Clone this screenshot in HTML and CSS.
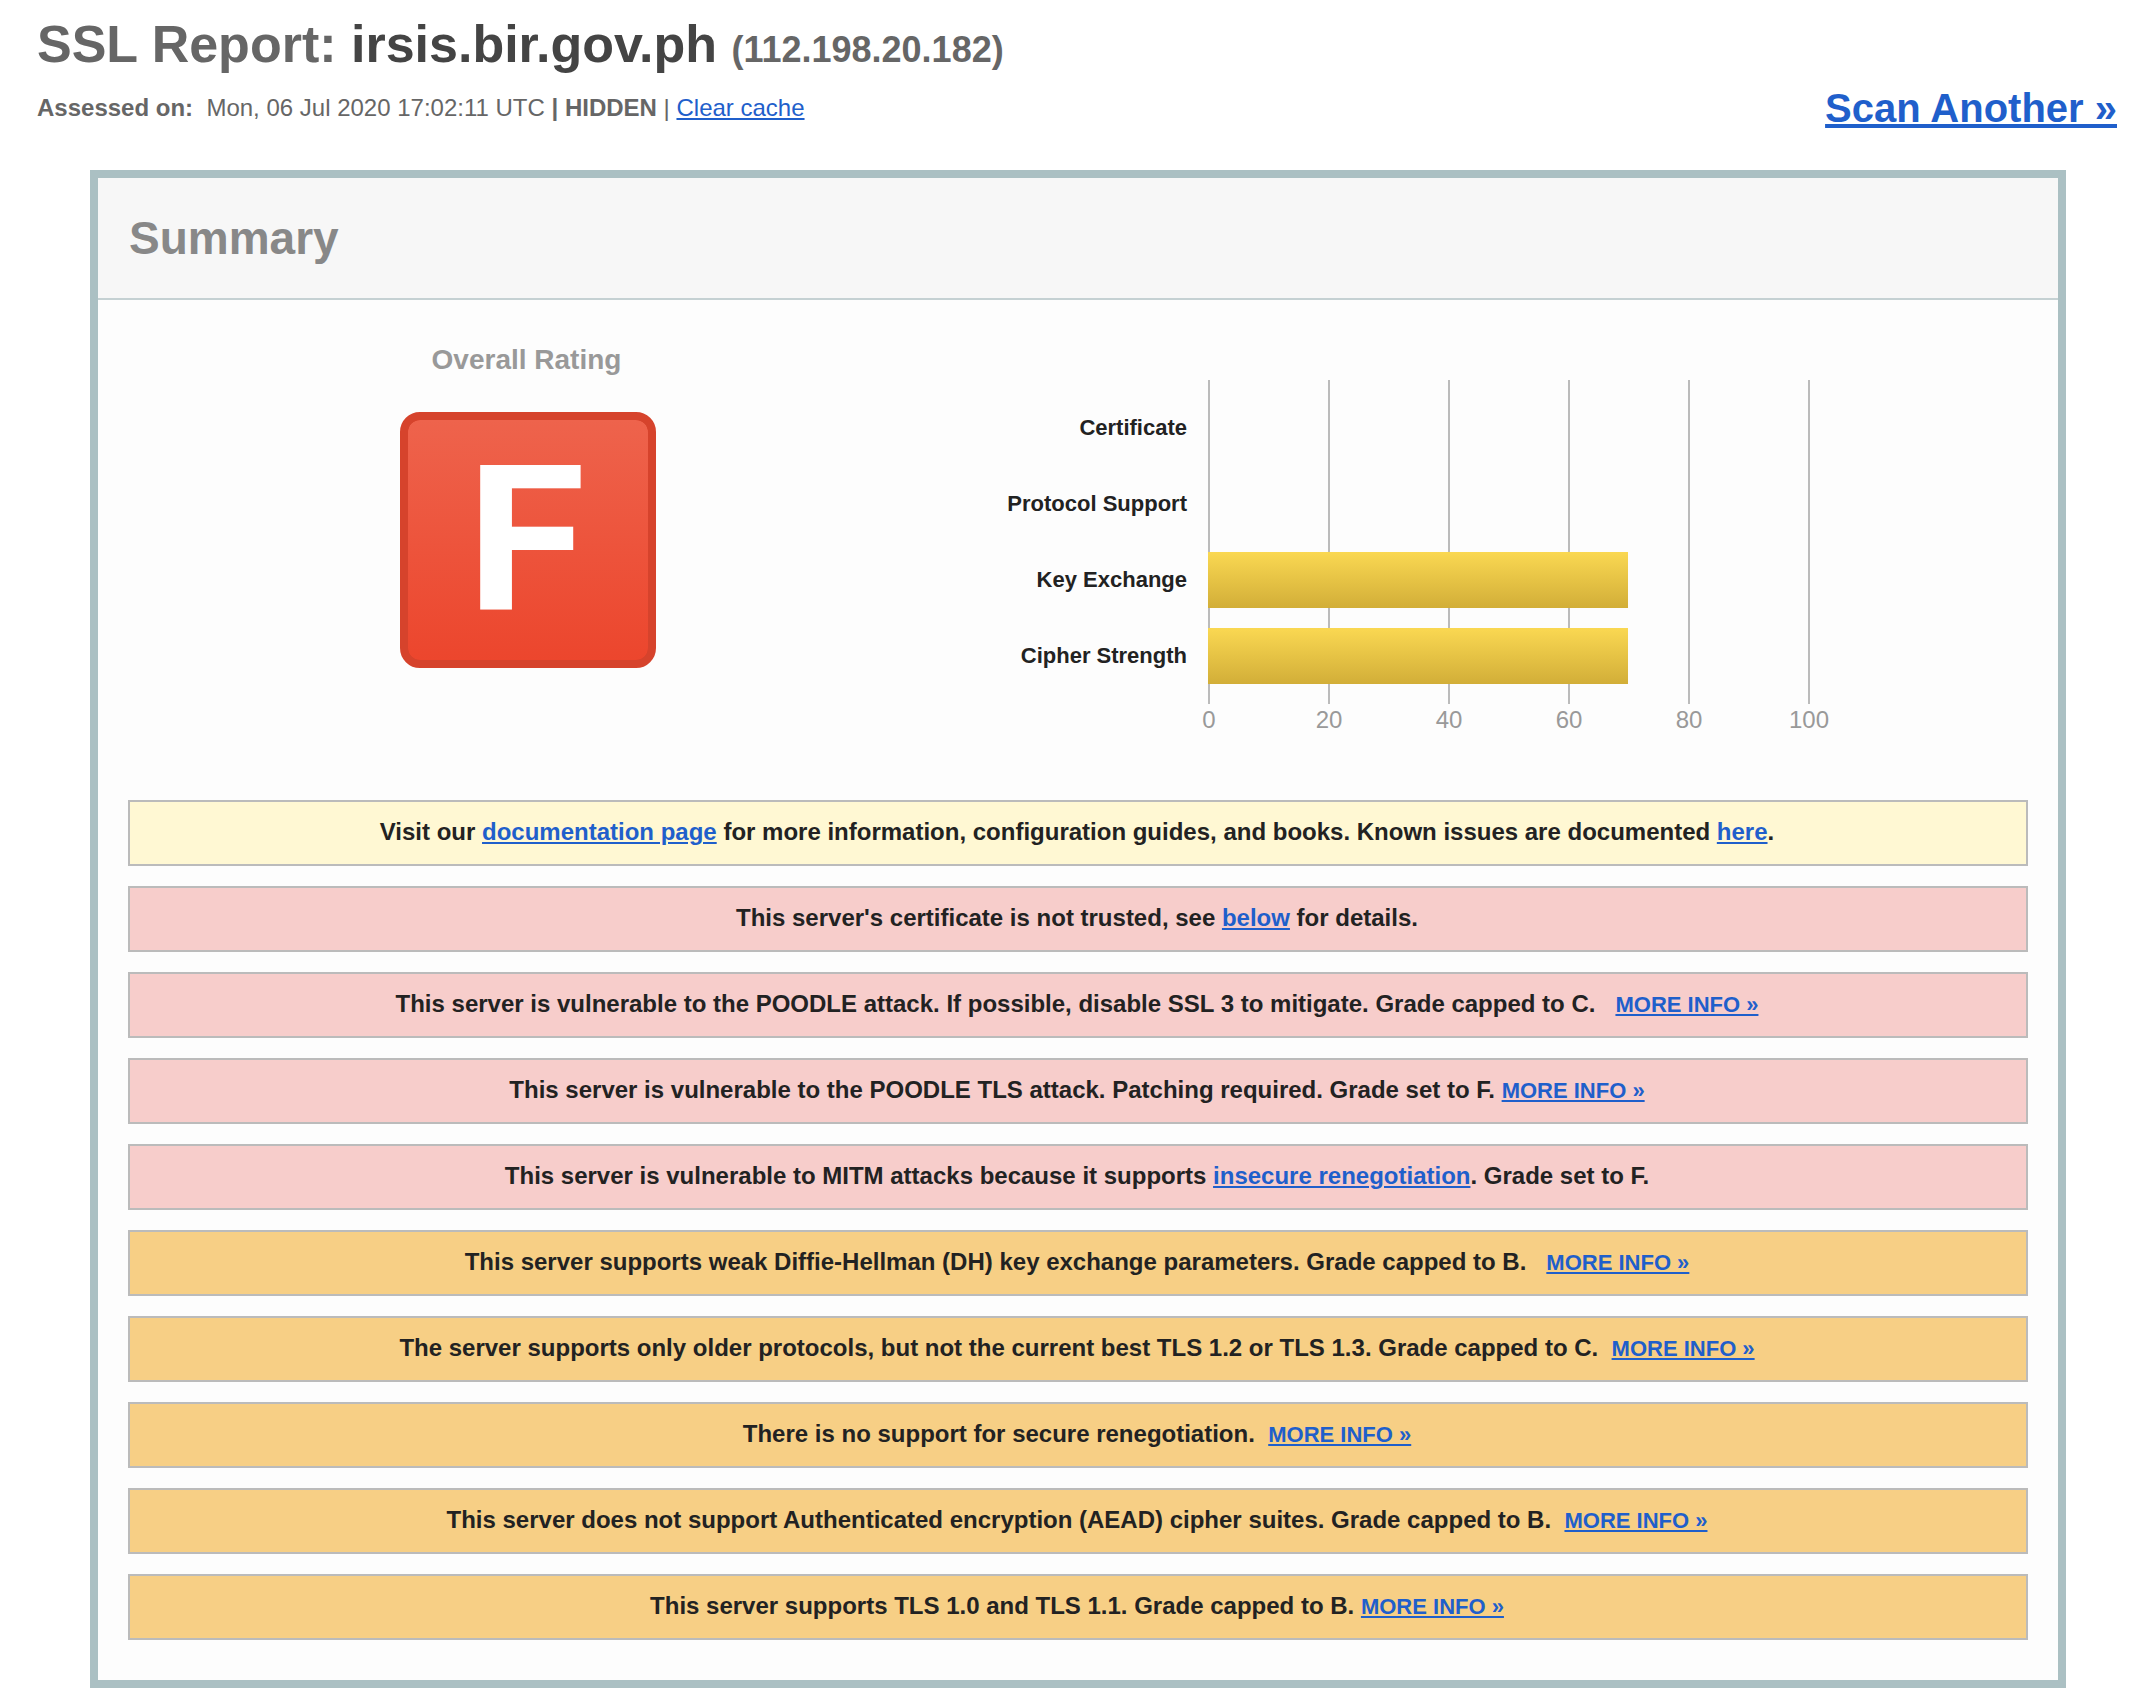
FILE: index.html
```html
<!DOCTYPE html>
<html lang="en">
<head>
<meta charset="utf-8">
<title>SSL Report: irsis.bir.gov.ph</title>
<link rel="stylesheet" href="styles.css">
</head>
<body>
<header class="page-header">
  <h1 class="title">SSL Report: <span class="host">irsis.bir.gov.ph</span> <span class="ip">(112.198.20.182)</span></h1>
  <div class="subline">
    <div class="assessed"><b>Assessed on:</b>&nbsp; Mon, 06 Jul 2020 17:02:11 UTC <b>| HIDDEN</b> | <a href="#">Clear cache</a></div>
    <a class="scan" href="#">Scan Another »</a>
  </div>
</header>
<main class="panel">
  <div class="panel-head"><h2>Summary</h2></div>
  <div class="panel-body">
    <section class="overview">
      <div class="rating">
        <div class="rating-title">Overall Rating</div>
        <div class="grade"><span class="grade-letter">F</span></div>
      </div>
      <div class="chart">
        <div class="labels">
          <div>Certificate</div>
          <div>Protocol Support</div>
          <div>Key Exchange</div>
          <div>Cipher Strength</div>
        </div>
        <div>
          <div class="plot">
            <div class="track"><div class="bar" style="width:0"></div></div>
            <div class="track"><div class="bar" style="width:0"></div></div>
            <div class="track"><div class="bar" style="width:70%"></div></div>
            <div class="track"><div class="bar" style="width:70%"></div></div>
          </div>
          <div class="axis"><span>0</span><span>20</span><span>40</span><span>60</span><span>80</span><span>100</span></div>
        </div>
      </div>
    </section>
    <section class="messages">
      <div class="msg info">Visit our <a href="#">documentation page</a> for more information, configuration guides, and books. Known issues are documented <a href="#">here</a>.</div>
      <div class="msg error">This server's certificate is not trusted, see <a href="#">below</a> for details.</div>
      <div class="msg error">This server is vulnerable to the POODLE attack. If possible, disable SSL 3 to mitigate. Grade capped to C. &nbsp; <a class="more" href="#">MORE INFO »</a></div>
      <div class="msg error">This server is vulnerable to the POODLE TLS attack. Patching required. Grade set to F. <a class="more" href="#">MORE INFO »</a></div>
      <div class="msg error">This server is vulnerable to MITM attacks because it supports <a href="#">insecure renegotiation</a>. Grade set to F.</div>
      <div class="msg warn">This server supports weak Diffie-Hellman (DH) key exchange parameters. Grade capped to B. &nbsp; <a class="more" href="#">MORE INFO »</a></div>
      <div class="msg warn">The server supports only older protocols, but not the current best TLS 1.2 or TLS 1.3. Grade capped to C.&nbsp; <a class="more" href="#">MORE INFO »</a></div>
      <div class="msg warn">There is no support for secure renegotiation.&nbsp; <a class="more" href="#">MORE INFO »</a></div>
      <div class="msg warn">This server does not support Authenticated encryption (AEAD) cipher suites. Grade capped to B.&nbsp; <a class="more" href="#">MORE INFO »</a></div>
      <div class="msg warn">This server supports TLS 1.0 and TLS 1.1. Grade capped to B. <a class="more" href="#">MORE INFO »</a></div>
    </section>
  </div>
</main>
</body>
</html>
```
FILE: styles.css
```css
* { box-sizing: border-box; }
body {
  margin: 0;
  background: #fff;
  color: #222;
  font: 24px/28px Arial, "Liberation Sans", sans-serif;
}
a {
  color: #1f5fcb;
  text-decoration: underline;
  text-decoration-thickness: 2px;
  text-underline-offset: 2px;
}

.page-header { height: 170px; padding: 14px 27px 0 37px; color: #666; }
.title { margin: 0; font-size: 52px; line-height: 60px; }
.host { color: #444; }
.ip { font-size: 36px; line-height: 1; }
.subline { display: flex; justify-content: space-between; align-items: flex-start; }
.assessed { padding-top: 20px; }
.scan {
  margin-top: 11px;
  font-size: 40px;
  line-height: 46px;
  font-weight: bold;
  text-decoration-thickness: 4px;
}

.panel { margin: 0 78px 0 90px; border: 8px solid #abc0c3; background: #fdfdfd; }
.panel-head {
  display: flex;
  align-items: center;
  height: 122px;
  padding-left: 31px;
  background: #f7f7f7;
  border-bottom: 2px solid #c5d1d3;
}
.panel-head h2 { margin: 0; font-size: 46px; line-height: 52px; color: #888; }
.panel-body { padding: 0 30px 40px; }

.overview { display: flex; height: 500px; }
.rating { width: 797px; padding-top: 44px; }
.rating-title { font-size: 28px; line-height: 32px; font-weight: bold; color: #999; text-align: center; }
.grade {
  width: 256px;
  height: 256px;
  margin: 36px 0 0 272px;
  padding-right: 5px;
  border: 8px solid #d6432c;
  border-radius: 20px;
  background: linear-gradient(#ee634c, #ec462d) padding-box, #d6432c;
  display: flex;
  justify-content: center;
}
.grade-letter {
  font-family: Roboto, Arial, sans-serif;
  font-size: 203px;
  line-height: 241px;
  font-weight: bold;
  color: #fff;
  transform: scaleX(1.065);
}

.chart { display: flex; padding-top: 80px; }
.labels {
  width: 262px;
  padding-top: 10px;
  font-size: 22px;
  line-height: 76px;
  font-weight: bold;
  text-align: right;
}
.plot {
  width: 602px;
  height: 324px;
  margin-left: 21px;
  padding: 10px 2px 10px 0;
  background: repeating-linear-gradient(to right, #bbb 0 2px, transparent 2px 120px);
}
.track { height: 76px; padding: 10px 0; }
.bar { height: 56px; background: linear-gradient(#fad852, #d2ae38); }
.axis {
  display: grid;
  grid-template-columns: repeat(6, 120px);
  margin: 2px 0 0 -38px;
  color: #999;
  text-align: center;
}

.messages { display: grid; gap: 20px; }
.msg {
  height: 66px;
  padding: 16px 2px 0 0;
  border: 2px solid #bbb;
  font-weight: bold;
  text-align: center;
}
.info { background: #fff8d3; }
.error { background: #f7cdcb; }
.warn { background: #f7cf85; }
.more { font-size: 22px; line-height: 1; }
```
